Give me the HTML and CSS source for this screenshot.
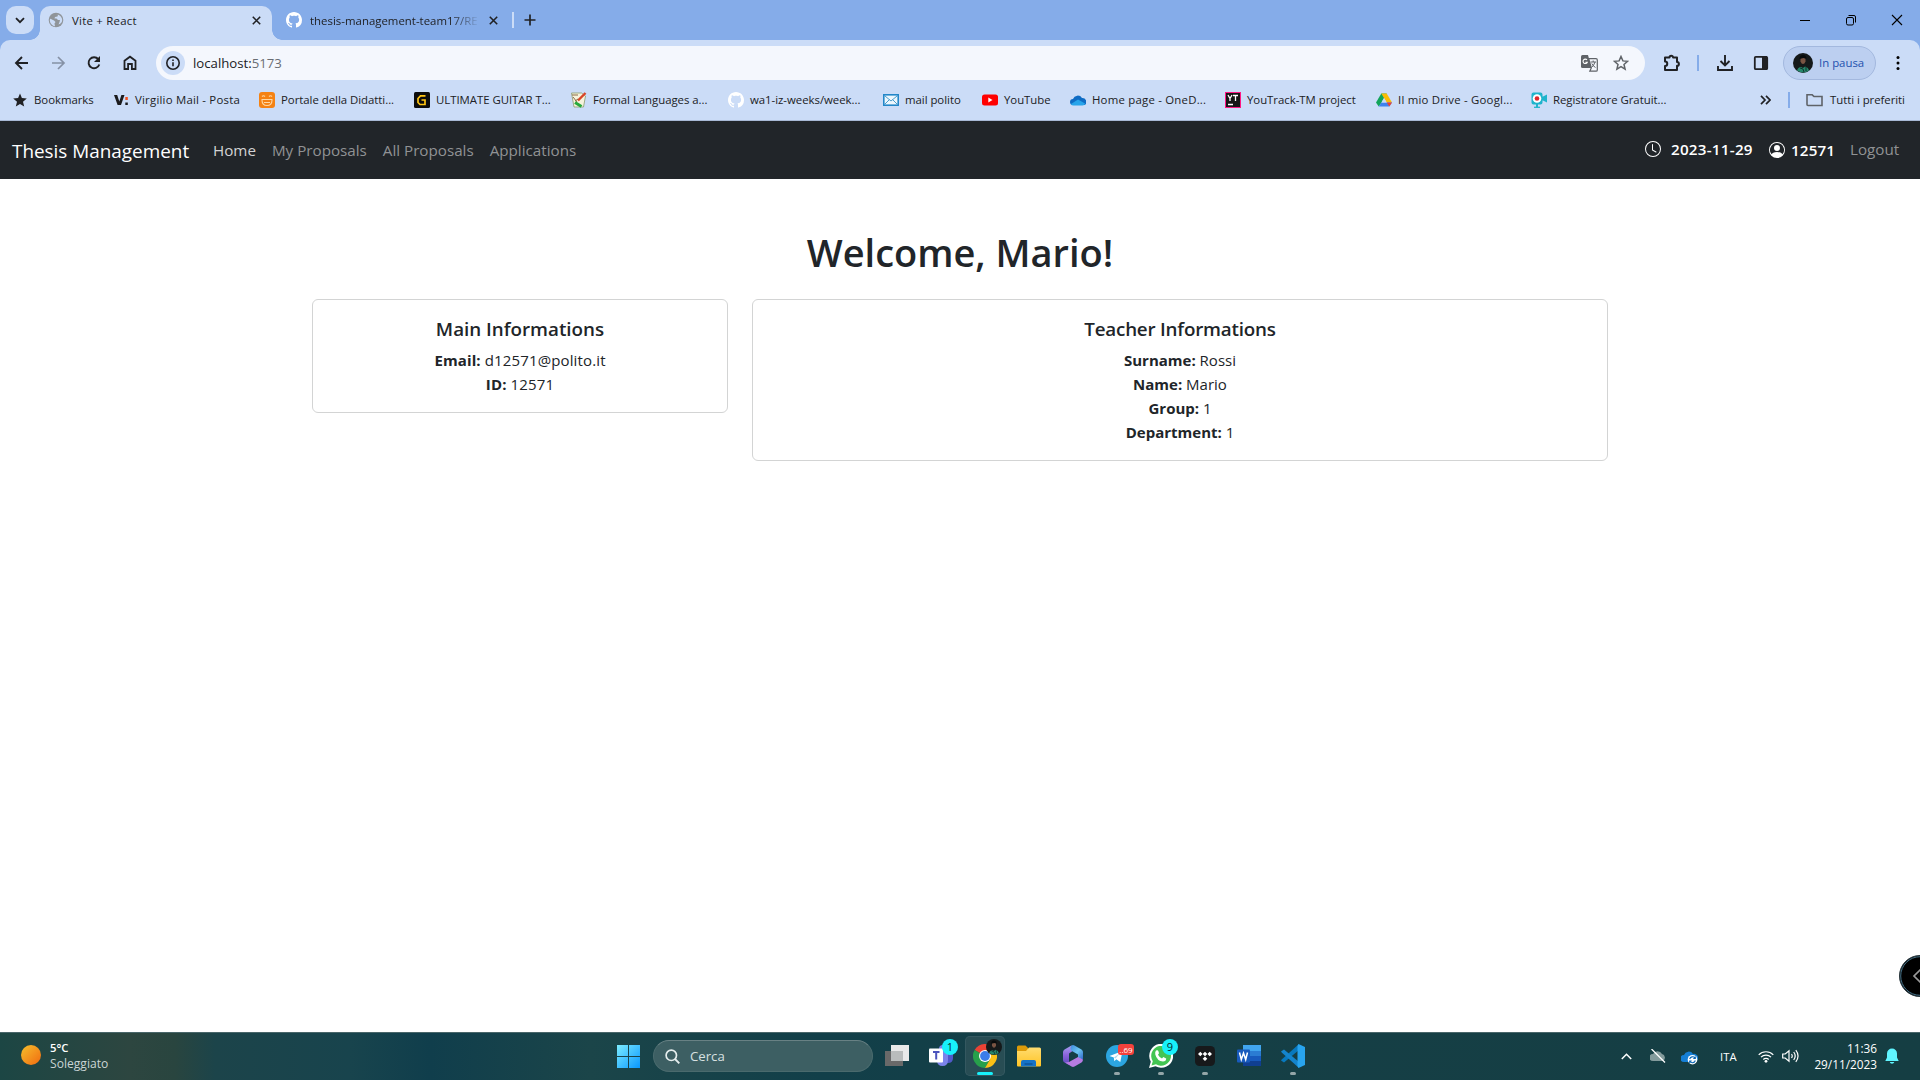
FILE: index.html
```html
<!DOCTYPE html>
<html lang="it">
<head>
<meta charset="utf-8">
<title>Vite + React</title>
<link rel="stylesheet" href="styles.css">
</head>
<body>
<svg width="0" height="0" class="defs" aria-hidden="true">
  <defs>
    <symbol id="github" viewBox="0 0 16 16"><path d="M8 0C3.58 0 0 3.58 0 8c0 3.54 2.29 6.53 5.47 7.59.4.07.55-.17.55-.38 0-.19-.01-.82-.01-1.49-2.01.37-2.53-.49-2.69-.94-.09-.23-.48-.94-.82-1.13-.28-.15-.68-.52-.01-.53.63-.01 1.08.58 1.23.82.72 1.21 1.87.87 2.33.66.07-.52.28-.87.51-1.07-1.78-.2-3.64-.89-3.64-3.95 0-.87.31-1.59.82-2.15-.08-.2-.36-1.02.08-2.12 0 0 .67-.21 2.2.82.64-.18 1.32-.27 2-.27s1.36.09 2 .27c1.53-1.04 2.2-.82 2.2-.82.44 1.1.16 1.92.08 2.12.51.56.82 1.27.82 2.15 0 3.07-1.87 3.75-3.65 3.95.29.25.54.73.54 1.48 0 1.07-.01 1.93-.01 2.2 0 .21.15.46.55.38A8.01 8.01 0 0 0 16 8c0-4.42-3.58-8-8-8z" fill="#fff"/></symbol>
    <symbol id="close" viewBox="0 0 8 8"><path d="M.7.7l6.600 6.600M7.300.7L.7 7.300" stroke="#202124" stroke-width="1.400"/></symbol>
    <symbol id="avatar" viewBox="0 0 20 20"><circle cx="10" cy="10" r="10" fill="#15191a"/><path d="M7.500 5q2.500-2 5 0v3.500q-1 2.500-2.500 2.500t-2.500-2.500z" fill="#7a5443"/><path d="M6.500 6q0-4 3.500-4t3.500 4l-3-1z" fill="#080b0c"/><path d="M4 17.500Q5 14 8 14l2 1 2-1.500q3.500 1 4 4Q10 21.500 4 17.500z" fill="#25866b"/><path d="M7 15l3 1 1 3M13 14v4" stroke="#11342e" fill="none"/></symbol>
    <linearGradient id="sun" x1="0" y1="0" x2="1" y2="1"><stop stop-color="#f7c02c"/><stop offset="1" stop-color="#f06a10"/></linearGradient>
    <linearGradient id="win" x1="0" y1="0" x2="1" y2="1"><stop stop-color="#7cecff"/><stop offset="1" stop-color="#0997ff"/></linearGradient>
    <linearGradient id="fold" x1="0" y1="0" x2="0" y2="1"><stop stop-color="#ffdc70"/><stop offset="1" stop-color="#ffc425"/></linearGradient>
    <linearGradient id="office" x1="0" y1="0" x2="0" y2="1"><stop stop-color="#a9a0f0"/><stop offset=".5" stop-color="#8a62dc"/><stop offset="1" stop-color="#5a48b8"/></linearGradient>
    <linearGradient id="office2" x1="0" y1="0" x2="1" y2="1"><stop stop-color="#3f8be0"/><stop offset=".5" stop-color="#6cc6f2"/><stop offset="1" stop-color="#2f62c8"/></linearGradient>
  </defs>
</svg>

<header class="browser">
  <div class="tabstrip">
    <div class="tab-search"><svg width="10" height="7" viewBox="0 0 10 7"><path d="M1 1.200l4 4 4-4" fill="none" stroke="#202124" stroke-width="1.800"/></svg></div>
    <div class="tab active">
      <svg width="16" height="16" viewBox="0 0 16 16"><circle cx="8" cy="8" r="7.300" fill="#8f9499"/><path d="M1.800 8C2 7 2.500 6.500 3 7l3 1.500 1.500 1.500-1 1.500.5 2.700C4 13.800 1.800 11 1.800 8zM8 2.200l2 .6-.5 1.700L7 5l-.5 1.500h2L10 8h2l-.5 2-1 2.500C13 11.800 14.200 10 14.200 8S12.500 2.500 8 2.200z" fill="#cbdcf7"/></svg>
      <span class="tab-title">Vite + React</span>
      <svg width="9" height="9"><use href="#close"/></svg>
    </div>
    <div class="tab">
      <svg width="16" height="16"><use href="#github"/></svg>
      <span class="tab-title faded">thesis-management-team17/RE</span>
      <svg width="9" height="9"><use href="#close"/></svg>
    </div>
    <i class="tab-sep"></i>
    <svg class="new-tab" width="12" height="12" viewBox="0 0 12 12"><path d="M6 .5v11M.5 6h11" stroke="#202124" stroke-width="1.700"/></svg>
    <div class="window-buttons">
      <svg width="46" height="40"><path d="M18 20.500h10" stroke="#000"/></svg>
      <svg width="46" height="40"><rect x="18.500" y="17.500" width="7" height="7.500" rx="1.500" fill="none" stroke="#000"/><path d="M20.500 15.500H26q1.500 0 1.500 1.500v5.500" fill="none" stroke="#000"/></svg>
      <svg width="46" height="40"><path d="M18 15l10 10M28 15L18 25" stroke="#000" stroke-width="1.100"/></svg>
    </div>
  </div>

  <div class="toolbar-bg">
    <div class="toolbar">
      <svg class="nav-icon" viewBox="0 0 36 36"><path d="M24 18H12.500M18 12l-6 6 6 6" fill="none" stroke="#202124" stroke-width="1.900"/></svg>
      <svg class="nav-icon" viewBox="0 0 36 36"><path d="M12 18h11.500M18 12l6 6-6 6" fill="none" stroke="#8591a5" stroke-width="1.700"/></svg>
      <svg class="nav-icon" viewBox="0 0 36 36"><path d="M22.300 14.200A5.500 5.500 0 1 0 23.300 19.500" fill="none" stroke="#202124" stroke-width="1.900"/><path d="M24 11v6h-6z" fill="#202124"/></svg>
      <svg class="nav-icon" viewBox="0 0 36 36"><path d="M12.500 24V15.800L18 11.700l5.500 4.100V24h-3.600v-5h-3.800v5z" fill="none" stroke="#202124" stroke-width="1.800"/></svg>
      <div class="omnibox">
        <span class="site-info"><svg width="16" height="16" viewBox="0 0 16 16"><circle cx="8" cy="8" r="6.200" fill="none" stroke="#202124" stroke-width="1.600"/><path d="M8 7.200v4M8 4.500v1.600" stroke="#202124" stroke-width="1.600"/></svg></span>
        <span class="url">localhost:<span class="port">5173</span></span>
        <svg class="translate" width="17" height="17" viewBox="0 0 17 17"><path d="M1.500 0H7l3.500 13H1.500Q0 13 0 11.500v-10Q0 0 1.500 0z" fill="#5f6368"/><path d="M6 5A2.200 2.200 0 1 0 6.300 7.200H4.300" fill="none" stroke="#fff" stroke-width="1.100"/><path d="M7.700 3.600H15q1.300 0 1.300 1.300v10q0 1.300-1.300 1.300H8.800L10.300 13z" fill="#f4f7fd" stroke="#5f6368" stroke-width="1.200"/><path d="M9.500 7h5.500M12.200 5.500V7M14 7q-1 3.500-3.500 5.500M10.800 8.500q1 2.500 3.700 4" fill="none" stroke="#5f6368"/></svg>
        <svg class="star" width="16" height="16" viewBox="0 0 16 16"><path d="M8 1.500l1.900 4.400 4.700.4-3.600 3.200 1.100 4.700L8 11.700l-4.100 2.500L5 9.500 1.400 6.300l4.700-.4z" fill="none" stroke="#5f6368" stroke-width="1.500"/></svg>
      </div>
      <svg class="puzzle" width="18" height="18" viewBox="0 0 18 18"><path d="M2 3.500h4.500a1.800 1.800 0 0 1 3.600 0H14V8a1.900 1.900 0 0 1 0 3.800V16H2v-4a2 2 0 0 0 0-4.500z" fill="none" stroke="#202124" stroke-width="2" stroke-linejoin="round"/></svg>
      <i class="bar-sep tool-sep"></i>
      <svg class="download" width="16" height="16" viewBox="0 0 16 16"><path d="M8 0v10M3.500 6L8 10.500 12.500 6M1 11v4h14v-4" fill="none" stroke="#202124" stroke-width="1.900"/></svg>
      <svg class="panel" width="16" height="16" viewBox="0 0 16 16"><rect x="1.800" y="1.800" width="12.400" height="12.400" rx="1" fill="none" stroke="#202124" stroke-width="1.800"/><path d="M9 1h5v14H9z" fill="#202124"/></svg>
      <div class="profile"><svg width="20" height="20"><use href="#avatar"/></svg><span>In pausa</span></div>
      <svg class="menu" width="4" height="16" viewBox="0 0 4 16"><circle cx="2" cy="2.500" r="1.500"/><circle cx="2" cy="8" r="1.500"/><circle cx="2" cy="13.500" r="1.500"/></svg>
    </div>

    <nav class="bookmarks">
      <div class="bm"><svg viewBox="0 0 16 16"><path d="M8 1.500l1.900 4.600 4.900.4-3.800 3.200 1.200 4.800L8 11.900l-4.200 2.600L5 9.700 1.200 6.500l4.900-.4z" fill="#202124"/></svg><span>Bookmarks</span></div>
      <div class="bm loose"><svg viewBox="0 0 16 16"><path d="M1 3h3.200l2.100 6.500L8.400 3h3.100L8 13H4.600z" fill="#1b1b1d"/><path d="M12.300 5h2.500v3h-2.500z" fill="#f4511e"/><path d="M12.300 10.500h2.500v2.500h-2.500z" fill="#1b1b1d"/></svg><span>Virgilio Mail - Posta</span></div>
      <div class="bm"><svg viewBox="0 0 16 16"><rect width="16" height="16" rx="3" fill="#f58213"/><path d="M3 4.500q1.500-1.500 3 0M10 4.500q1.500-1.500 3 0M2.500 7.500h11M3 8q0 5.500 5 5.500T13 8M5 10.500h6" fill="none" stroke="#ffd7a3" stroke-width="1.100"/></svg><span>Portale della Didatti...</span></div>
      <div class="bm"><svg viewBox="0 0 16 16"><rect width="16" height="16" rx="1.500" fill="#0c0c0c"/><path d="M11.500 3.800H6.500L4 6.500v4L6 12.500h5V8H7.500" fill="none" stroke="#ffc514" stroke-width="1.700"/></svg><span>ULTIMATE GUITAR T...</span></div>
      <div class="bm"><svg viewBox="0 0 16 16"><path d="M.5 1h10l4 3-2 11H3z" fill="#f6f3dc" stroke="#8c9a6d" stroke-width=".8"/><path d="M14.500 1L7 8.500" stroke="#d84528" stroke-width="2.400"/><path d="M2 5l4 5M1 3h6M4 9l3-2" stroke="#8a6a45"/><path d="M4 10.500l6.500 4" stroke="#28a93d" stroke-width="3"/></svg><span>Formal Languages a...</span></div>
      <div class="bm"><svg><use href="#github"/></svg><span>wa1-iz-weeks/week...</span></div>
      <div class="bm"><svg viewBox="0 0 16 16"><rect x=".8" y="2.800" width="14.400" height="10.400" fill="#edf7fd" stroke="#2387c9" stroke-width="1.600"/><path d="M2 4l6 5 6-5M2 12l4.500-4.500M14 12L9.500 7.500" fill="none" stroke="#4a9dcc"/></svg><span>mail polito</span></div>
      <div class="bm"><svg viewBox="0 0 16 16"><rect y="2.500" width="16" height="11" rx="2.500" fill="#f00"/><path d="M6.300 5.500v5l4.200-2.500z" fill="#fff"/></svg><span>YouTube</span></div>
      <div class="bm loose"><svg viewBox="0 0 16 16"><path d="M3 7a5 5 0 0 1 9-1 4 4 0 0 1 3 7H3a3 3 0 0 1 0-6z" fill="#0f6cc4"/><path d="M1 12l7-4.500 7 4q0 2-2.500 2H3.500Q1.500 13.500 1 12z" fill="#27a4ea"/></svg><span>Home page - OneD...</span></div>
      <div class="bm"><svg viewBox="0 0 16 16"><path d="M0 0h16v16H0z" fill="#ff1684"/><path d="M1 1h14v14H1z" fill="#151515"/><path d="M3 3l2 3.500L7 3M5 6v3M8 3.500h5M10.500 3.500V9M3 12.500h5" fill="none" stroke="#fff" stroke-width="1.300"/></svg><span>YouTrack-TM project</span></div>
      <div class="bm loose"><svg viewBox="0 0 16 16"><path d="M5.300 1.500h5.400L5.400 10.800 2.700 14.500 0 10.500z" fill="#12a45a"/><path d="M5.300 1.500h5.400L16 10.500h-5.300z" fill="#fbbc04"/><path d="M5.400 10.500H16l-2.700 4H2.700z" fill="#3f82ef"/><path d="M10.700 10.500H16l-2.700 4z" fill="#ea4335"/><path d="M8 6l2.700 4.500H5.400z" fill="#cbdcf7"/></svg><span>Il mio Drive - Googl...</span></div>
      <div class="bm"><svg viewBox="0 0 16 16"><path d="M2.500.5h7q2 0 2 2v8q0 2-2 2h-7q-2 0-2-2v-8q0-2 2-2zM11 5l5-2.500v8L11 8zM5 12h2v3.500H5z" fill="#1fb4cc"/><circle cx="6" cy="6.500" r="4.300" fill="#fff"/><circle cx="6" cy="6.500" r="2.300" fill="#e0252b"/><path d="M3 15.300h6" stroke="#1fb4cc" stroke-width="1.300"/></svg><span>Registratore Gratuit...</span></div>
      <div class="bm-end">
        <svg width="11" height="10" viewBox="0 0 11 10"><path d="M1 .8L5 5 1 9.200M6 .8L10 5 6 9.200" fill="none" stroke="#202124" stroke-width="1.700"/></svg>
        <i class="bar-sep"></i>
        <svg class="folder" width="17" height="14" viewBox="0 0 17 14"><path d="M1 11.500V1.800h5.200L8 3.500h8v9H2Q1 12.500 1 11.500z" fill="none" stroke="#5f6368" stroke-width="1.600"/></svg>
        <span>Tutti i preferiti</span>
      </div>
    </nav>
  </div>
</header>

<nav class="navbar">
  <a class="brand">Thesis Management</a>
  <div class="links"><a class="current">Home</a><a>My Proposals</a><a>All Proposals</a><a>Applications</a></div>
  <div class="session">
    <svg width="16" height="16" viewBox="0 0 16 16" fill="#fff"><path d="M8 3.500a.5.500 0 0 0-1 0V9a.5.500 0 0 0 .252.434l3.500 2a.5.500 0 0 0 .496-.868L8 8.710z"/><path d="M8 16A8 8 0 1 0 8 0a8 8 0 0 0 0 16m7-8A7 7 0 1 1 1 8a7 7 0 0 1 14 0"/></svg>
    <span class="date">2023-11-29</span>
    <svg class="user" width="16" height="16" viewBox="0 0 16 16" fill="#fff"><path d="M11 6a3 3 0 1 1-6 0 3 3 0 0 1 6 0"/><path fill-rule="evenodd" d="M0 8a8 8 0 1 1 16 0A8 8 0 0 1 0 8m8-7a7 7 0 0 0-5.468 11.370C3.242 11.226 4.805 10 8 10s4.757 1.225 5.468 2.370A7 7 0 0 0 8 1"/></svg>
    <span class="uid">12571</span>
    <a class="logout">Logout</a>
  </div>
</nav>

<main class="page">
  <h1>Welcome, Mario!</h1>
  <div class="cards">
    <section class="card main-info"><h2>Main Informations</h2><p><b>Email:</b> d12571@polito.it</p><p><b>ID:</b> 12571</p></section>
    <section class="card teacher-info"><h2>Teacher Informations</h2><p><b>Surname:</b> Rossi</p><p><b>Name:</b> Mario</p><p><b>Group:</b> 1</p><p><b>Department:</b> 1</p></section>
  </div>
  <div class="side-handle"><svg width="21" height="42" viewBox="0 0 21 42"><circle cx="21" cy="21" r="20.500" fill="#000" stroke="#26343b"/><circle cx="21" cy="21" r="19.300" fill="none" stroke="#4d7f98" stroke-width=".9"/><path d="M21.500 14.500L15 21l6.500 6.500" fill="none" stroke="#999" stroke-width="1.700"/></svg></div>
</main>

<footer class="taskbar">
  <div class="weather"><svg width="20" height="20"><circle cx="10" cy="10" r="8.500" fill="url(#sun)" transform="translate(-1.760 -1.760) scale(1.176)"/></svg><div><b>5°C</b><span>Soleggiato</span></div></div>
  <div class="apps">
    <svg class="start" width="23" height="23" viewBox="0 0 23 23"><path d="M0 0h11v11H0zM12 0h11v11H12zM0 12h11v11H0zM12 12h11v11H12z" fill="url(#win)"/></svg>
    <div class="search"><svg width="15" height="15" viewBox="0 0 15 15"><circle cx="6.300" cy="6.300" r="5.200" fill="none" stroke="#e6eeee" stroke-width="1.700"/><path d="M10 10l4.300 4.300" stroke="#e6eeee" stroke-width="1.900"/></svg><span>Cerca</span></div>
    <div class="app"><svg width="24" height="24" viewBox="0 0 24 24"><path d="M6 1h18v16H6z" fill="#e9e9e9"/><path d="M0 7h18v15H0z" fill="#696969"/><path d="M6 7h12v10H6z" fill="#b9bcbc"/></svg></div>
    <div class="app"><svg width="24" height="24" viewBox="0 0 24 24"><circle cx="14" cy="5" r="4" fill="#7b83eb"/><path d="M16 8h8v6q0 5-5 5h-3z" fill="#5059c9"/><path d="M8 8h11v8q0 6-5.500 6T8 16z" fill="#7b83eb"/><rect y="4.500" width="14" height="14" rx="1" fill="#fff"/><path d="M4 8h6.500M7.200 8v7.500" stroke="#4b53bc" stroke-width="2"/></svg><span class="badge">1</span></div>
    <div class="app selected"><svg width="24" height="24" viewBox="0 0 24 24"><path d="M12 12L1.600 6A12 12 0 0 1 22.400 6z" fill="#ea4335"/><path d="M12 12L1.600 6A12 12 0 0 0 12 24l5-9z" fill="#27a04b"/><path d="M12 12l5.200 3L12 24A12 12 0 0 0 22.400 6H12z" fill="#fbc116"/><circle cx="12" cy="12" r="6" fill="#fff"/><circle cx="12" cy="12" r="4.900" fill="#3b7de9"/></svg><span class="badge picture"><svg width="16" height="16"><use href="#avatar"/></svg></span><i class="mark"></i></div>
    <div class="app"><svg width="24" height="24" viewBox="0 0 24 24"><path d="M0 3q0-1.500 1.500-1.500h7L11 4v4H0z" fill="#dc9a09"/><path d="M0 7h9l3-3.500h10.500Q24 3.500 24 5v16.500q0 1-1 1H1q-1 0-1-1z" fill="url(#fold)"/><path d="M4 22.500V18q0-2 2-2h11q2 0 2 2v4.500z" fill="#1573c7"/><path d="M7.500 20h8" stroke="#0b4f91" stroke-width="1.300"/></svg></div>
    <div class="app"><svg width="24" height="24" viewBox="0 0 24 24"><path d="M10.500 1.500L3.500 5.500Q2 6.500 2 8v8q0 1.500 1.500 2.500L8 21V9.500L13 6z" fill="url(#office)"/><path d="M10.500 1.500Q12 .7 13.500 1.500l7 4Q22 6.500 22 8v7l-5 1V10.500L10 6.500Q9 3 10.500 1.500z" fill="url(#office2)"/><path d="M4 18.500l4-.5 9-5 5 2.500q0 2-1.500 3l-7 4q-1.500.8-3 0z" fill="#b67be2"/></svg></div>
    <div class="app"><svg width="24" height="24" viewBox="0 0 24 24"><circle cx="12" cy="12" r="11" fill="#2ca5e0"/><path d="M4.500 12l13-5-2.200 11-4-2.800-2 2-.5-3.800z" fill="#fff"/><path d="M9 13.500l6-4.500-4.500 5.500z" fill="#b3d9ed"/></svg><span class="badge count">..69</span><i class="mark"></i></div>
    <div class="app"><svg width="24" height="24" viewBox="0 0 24 24"><path d="M0 24l1.800-6.300A12 12 0 1 1 6.500 22.300z" fill="#fff"/><path d="M2.500 21.500l1.300-4.300A9.900 9.900 0 1 1 7 20.300z" fill="#43c553"/><path d="M7 6.500q2-1 2.500 1l.5 1.800-1 1.400q1.500 2.800 4 3.800l1.300-1.400 2.900 1.500q0 3-3.200 3Q8 17 6.300 10.500q-.5-2.500.7-4z" fill="#fff"/></svg><span class="badge">9</span><i class="mark"></i></div>
    <div class="app"><svg width="24" height="24" viewBox="0 0 24 24"><rect x="2" y="2" width="20" height="20" rx="4.500" fill="#17191b"/><path d="M5 10l2.300-2.300L9.600 10l-2.300 2.300zM9.700 10L12 7.700l2.300 2.300-2.300 2.300zM14.400 10l2.300-2.300L19 10l-2.300 2.300zM9.700 14.700l2.300-2.300 2.300 2.300L12 17z" fill="#fff"/></svg><i class="mark"></i></div>
    <div class="app"><svg width="24" height="24" viewBox="0 0 24 24"><path d="M6 1h18v6H6z" fill="#41a5ee"/><path d="M6 7h18v5H6z" fill="#2b7cd3"/><path d="M6 12h18v5H6z" fill="#185abd"/><path d="M6 17h18v5H6z" fill="#103f91"/><rect y="5.500" width="13" height="13" rx="1" fill="#185abd"/><path d="M2.500 8.500l1.800 7 2.200-6.500 2.200 6.500 1.800-7" fill="none" stroke="#fff" stroke-width="1.500"/></svg></div>
    <div class="app"><svg width="24" height="24" viewBox="0 0 24 24"><path d="M1 15.200L18 0v6L3 18.500 0 16.500z" fill="#0879be"/><path d="M1 8.800L18 24v-6L3 5.500 0 7.500z" fill="#1484cc"/><path d="M17.500 0L24 3v18l-6.500 3-1-2V2z" fill="#28a4ee"/></svg><i class="mark"></i></div>
  </div>
  <div class="tray">
    <svg class="up" width="11" height="7" viewBox="0 0 11 7"><path d="M.8 6L5.500 1.200 10.200 6" fill="none" stroke="#fff" stroke-width="1.500"/></svg>
    <svg class="cloud" width="16" height="14" viewBox="0 0 16 14"><path d="M3 5a5 5 0 0 1 9 0 3.800 3.800 0 0 1 1 7H3a3.500 3.500 0 0 1 0-7z" fill="#839b9c"/><path d="M1.500 0L15 13.500" stroke="#fff" stroke-width="1.300"/></svg>
    <svg class="drive" width="17" height="15" viewBox="0 0 17 15"><path d="M3 5a5 5 0 0 1 9-1 4 4 0 0 1 2 8H3a3.500 3.500 0 0 1 0-7z" fill="#157fd5"/><circle cx="11.500" cy="9.700" r="4.800" fill="#fff"/><path d="M8.700 9a3 3 0 0 1 5.300-1M14.300 10.500a3 3 0 0 1-5.300 1M14.300 6.500v2h-2M8.700 13v-2h2" fill="none" stroke="#0865b5" stroke-width="1.100"/></svg>
    <span class="lang">ITA</span>
    <svg class="wifi" width="16" height="13" viewBox="0 0 16 13"><g fill="none" stroke="#fff" stroke-width="1.200"><path d="M.7 4.800a10.300 10.300 0 0 1 14.600 0M3 7.200a7 7 0 0 1 10 0M5.300 9.500a3.800 3.800 0 0 1 5.400 0"/></g><circle cx="8" cy="11.300" r="1.400" fill="#fff"/></svg>
    <svg class="volume" width="17" height="14" viewBox="0 0 17 14"><g fill="none" stroke="#fff" stroke-width="1.200"><path d="M.7 5v4h2.500L7 12.300V1.700L3.200 5zM9.500 5q1.500 2 0 4M11.700 3q3 4 0 8M13.800 1.200q4.500 5.800 0 11.600"/></g></svg>
    <div class="clock"><span>11:36</span><span>29/11/2023</span></div>
    <svg class="bell" width="14" height="16" viewBox="0 0 14 16"><path d="M7 .5a5 5 0 0 0-5 5v4L.3 13h13.400L12 9.500v-4a5 5 0 0 0-5-5zM4.700 14h4.600Q8.700 15.700 7 15.700T4.700 14z" fill="#60f5ff"/></svg>
  </div>
</footer>
</body>
</html>
```
FILE: styles.css
```css
* { box-sizing: border-box; }
body {
  margin: 0;
  width: 1920px;
  height: 1080px;
  overflow: hidden;
  display: flex;
  flex-direction: column;
  background: #fff;
  color: #212529;
  font-family: "Open Sans", "Noto Sans", sans-serif;
}
svg { display: block; flex: none; }
.defs { position: absolute; }

/* Browser window */
.browser { height: 121px; flex: none; background: #85ace9; color: #202124; font-size: 11.4px; white-space: nowrap; }
.tabstrip { height: 40px; display: flex; align-items: center; padding-left: 6px; }
.tab-search { width: 28px; height: 28px; border-radius: 10px; background: #cbdcf7; display: grid; place-items: center; }
.tab { width: 232px; height: 34px; margin-top: 6px; display: flex; align-items: center; padding: 0 11px 6px 8px; }
.tab.active { margin-left: 6px; background: #cbdcf7; border-radius: 10px 10px 0 0; position: relative; }
.tab.active::before, .tab.active::after { content: ""; position: absolute; bottom: 0; width: 10px; height: 10px; }
.tab.active::before { left: -10px; background: radial-gradient(circle at 0 0, transparent 9.5px, #cbdcf7 10px); }
.tab.active::after { right: -10px; background: radial-gradient(circle at 100% 0, transparent 9.5px, #cbdcf7 10px); }
.tab + .tab { width: 240px; padding-left: 14px; padding-right: 13px; }
.tab-title { flex: 1; margin: 0 14px 0 8px; letter-spacing: .25px; }
.tab-title.faded { flex: none; width: 170px; margin-right: 9px; letter-spacing: .02px; -webkit-mask-image: linear-gradient(90deg, #000 140px, transparent 170px); mask-image: linear-gradient(90deg, #000 140px, transparent 170px); }
.tab-sep { width: 2px; height: 16px; background: #cbdcf7; }
.new-tab { margin-left: 10px; }
.window-buttons { display: flex; margin-left: auto; }
.toolbar-bg { height: 81px; background: #cbdcf7; border-radius: 10px 10px 0 0; border-bottom: 1px solid #a8b9d5; }
.toolbar { height: 46px; display: flex; align-items: center; padding: 0 20px 0 4px; }
.nav-icon { width: 36px; height: 36px; }
.omnibox { width: 1489px; height: 34px; margin-left: 8px; display: flex; align-items: center; padding: 0 16px 0 5px; border-radius: 17px; background: #f4f7fd; }
.site-info { width: 24px; height: 24px; border-radius: 50%; background: #cbdcf7; display: grid; place-items: center; }
.url { flex: 1; margin-left: 8px; font-size: 13.2px; }
.port { color: #696d73; }
.star { margin-left: 15px; }
.puzzle { margin-left: 18px; }
.bar-sep { width: 2px; height: 16px; background: #85ace9; }
.tool-sep { margin-left: 16px; }
.download { margin-left: 18px; }
.panel { margin-left: 20px; }
.profile { width: 93px; height: 34px; margin-left: 14px; padding-left: 9px; display: flex; align-items: center; gap: 6px; border: 1px solid #a3b8de; border-radius: 17px; background: #bccff0; color: #1f51ae; font-size: 11.4px; }
.profile span { padding-bottom: 1px; }
.menu { margin-left: auto; }
.bookmarks { height: 28px; display: grid; grid-template-columns: 101px 146px 155px 157px 157px 155px 99px 88px 155px 151px 155px 229px 1fr; padding-left: 12px; }
.bm { display: flex; align-items: center; gap: 6px; letter-spacing: -.03px; }
.bm.loose { letter-spacing: .22px; }
.bm svg { width: 16px; height: 16px; }
.bm span, .bm-end span { padding-bottom: 2px; }
.bm-end { display: flex; align-items: center; letter-spacing: -.05px; }
.bm-end .bar-sep { margin-left: 17px; }
.folder { margin: 0 7px 0 16px; }

/* Application bar */
.navbar { height: 58px; flex: none; display: flex; align-items: center; padding: 0 18px 0 12px; background: #212529; white-space: nowrap; }
.brand { width: 177px; color: #fff; font-size: 18.9px; padding-top: 1px; }
.links { display: flex; gap: 16px; margin-left: 24px; color: #909294; font-size: 15.2px; }
.links .current { color: #d3d3d4; }
.session { display: flex; align-items: center; margin-left: auto; color: #fff; font-size: 15.2px; font-weight: 600; padding-bottom: 2px; }
.date { width: 82px; margin-left: 10px; letter-spacing: .25px; }
.user { margin: 2px 6px 0 16px; }
.uid { width: 43px; margin-top: 2px; letter-spacing: .15px; }
.logout { width: 52px; margin-left: 16px; color: #909294; font-weight: 400; }

/* Home page */
.page { flex: 1; position: relative; padding: 49px 312px 0; text-align: center; }
h1 { margin: 0 0 23px; font-size: 38px; line-height: 48px; font-weight: 600; }
.cards { display: grid; grid-template-columns: 416px 856px; gap: 24px; align-items: start; }
.card { padding: 17px 16px 16px; border: 1px solid #d3d4d4; border-radius: 6px; font-size: 15px; line-height: 24px; }
.card h2 { margin: 0 0 7px; font-size: 18.8px; line-height: 24px; font-weight: 600; }
.card p { margin: 0; }
.main-info p { letter-spacing: .13px; }
.teacher-info h2 { letter-spacing: -.2px; }
.side-handle { position: absolute; right: 0; top: 776px; }

/* Windows taskbar */
.taskbar { height: 48px; flex: none; display: grid; grid-template-columns: 617px 1fr 301px; border-top: 1px solid #49666a; padding-bottom: 1px; color: #fff; font-size: 11.8px; white-space: nowrap; background: linear-gradient(90deg, #1c4644 0, #2d4640 130px, #29453f 175px, #1c444a 215px, #18444d 350px, #103e4c 430px, #1b4549 590px, #123f49 820px, #153f46 1100px, #153e43 1920px); }
.weather { display: flex; align-items: center; gap: 9px; padding-left: 21px; }
.weather svg { margin-bottom: 2px; }
.weather div { display: flex; flex-direction: column; line-height: 16px; }
.weather b { font-size: 11.3px; font-weight: 600; }
.weather span { color: #c9d4d4; font-size: 12.1px; }
.apps { display: flex; align-items: center; }
.search { width: 220px; height: 32px; margin: 0 2px 0 13px; padding-left: 11px; display: flex; align-items: center; gap: 10px; border-radius: 16px; border: 1px solid #4a6a6d; border-top-color: #688184; background: #3d5f63; color: #d7e0e0; font-size: 13.2px; }
.app { width: 40px; height: 40px; margin: 0 2px; position: relative; display: grid; place-items: center; border-radius: 5px; }
.app.selected { background: #284d54; box-shadow: inset 0 0 0 1px #345860; }
.badge { position: absolute; left: 21px; top: 3px; width: 16px; height: 16px; border-radius: 8px; background: #17f1fb; color: #062b2e; font-size: 11px; line-height: 16px; text-align: center; }
.badge.picture { background: none; }
.badge.count { top: 8px; width: 16px; height: 11px; border-radius: 3px; background: #f4413c; color: #fff; font-size: 8px; line-height: 11px; }
.mark { position: absolute; left: 17px; bottom: 1px; width: 6px; height: 3px; border-radius: 2px; background: #94a6a8; }
.selected .mark { left: 12px; width: 16px; background: #17f1fb; }
.tray { display: flex; align-items: center; padding-left: 1px; }
.up { margin-left: 1px; }
.cloud { margin-left: 18px; }
.drive { margin: 2px 0 0 15px; }
.lang { width: 18px; margin-left: 22px; font-size: 11.3px; }
.wifi { margin-left: 20px; }
.volume { margin-left: 8px; }
.clock { width: 78px; display: flex; flex-direction: column; align-items: flex-end; line-height: 16px; }
.bell { margin-left: 8px; }
```
